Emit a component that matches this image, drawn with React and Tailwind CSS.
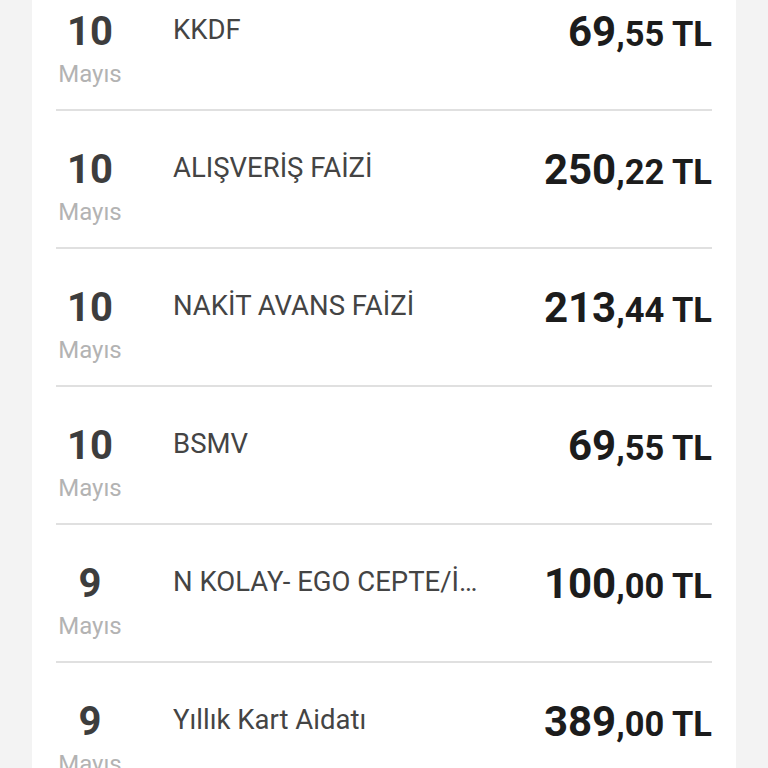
import React from 'react';

const rows = [
  { day: '10', month: 'Mayıs', desc: 'KKDF', whole: '69', frac: '55' },
  { day: '10', month: 'Mayıs', desc: 'ALIŞVERİŞ FAİZİ', whole: '250', frac: '22' },
  { day: '10', month: 'Mayıs', desc: 'NAKİT AVANS FAİZİ', whole: '213', frac: '44' },
  { day: '10', month: 'Mayıs', desc: 'BSMV', whole: '69', frac: '55' },
  { day: '9', month: 'Mayıs', desc: 'N KOLAY- EGO CEPTE/İSTANBUL KART', whole: '100', frac: '00' },
  { day: '9', month: 'Mayıs', desc: 'Yıllık Kart Aidatı', whole: '389', frac: '00' },
];

const TransactionRow = ({ row, last }) => (
  <div className={last ? '' : 'border-b-2 border-[#e0e0e0]'}>
    <div className="flex items-start h-[136px] pt-[37px]">
      {/* Date */}
      <div className="w-[68px] flex flex-col items-center shrink-0">
        <span className="text-[40px] leading-[44px] font-bold text-[#3d3d3d]">{row.day}</span>
        <span className="text-[24px] leading-[28px] mt-[6px] text-[#b3b3b3]">{row.month}</span>
      </div>

      {/* Description */}
      <div className="ml-[49px] mt-[4px] w-[314px] truncate text-[27.5px] leading-[32px] text-[#444]">
        {row.desc}
      </div>

      {/* Amount */}
      <div className="ml-auto shrink-0 font-bold text-[#1c1c1c] leading-[44px] whitespace-nowrap">
        <span className="text-[42px]">{row.whole}</span>
        <span className="text-[34.5px]">,{row.frac} TL</span>
      </div>
    </div>
  </div>
);

export default function App() {
  return (
    <div className="min-h-screen bg-[#f3f3f3] font-['Roboto',sans-serif] overflow-hidden">
      <div className="mx-[32px] bg-white px-[24px] -mt-[27px]">
        {rows.map((row, i) => (
          <TransactionRow key={i} row={row} last={i === rows.length - 1} />
        ))}
      </div>
    </div>
  );
}
